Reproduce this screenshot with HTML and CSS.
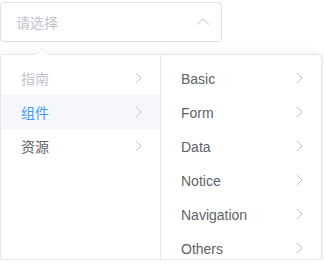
FILE: index.html
```html
<!DOCTYPE html>
<html>
<head>
<meta charset="utf-8">
<link rel="stylesheet" href="styles.css">
</head>
<body>
<div class="page">
  <div class="input">
    <span class="placeholder">请选择</span>
    <svg class="caret" width="14" height="8" viewBox="0 0 14 8"><polyline points="1,6.5 7,1 13,6.5" fill="none" stroke="#c0c4cc" stroke-width="1"/></svg>
  </div>
  <div class="dropdown">
    <span class="arrow"></span>
    <div class="panel">
      <ul class="menu">
        <li class="node disabled"><span>指南</span><svg class="chev" width="14" height="14" viewBox="0 0 14 14"><polyline points="5,2 10,7 5,12" fill="none" stroke="#c0c4cc" stroke-width="1"/></svg></li>
        <li class="node active"><span>组件</span><svg class="chev" width="14" height="14" viewBox="0 0 14 14"><polyline points="5,2 10,7 5,12" fill="none" stroke="#c0c4cc" stroke-width="1"/></svg></li>
        <li class="node"><span>资源</span><svg class="chev" width="14" height="14" viewBox="0 0 14 14"><polyline points="5,2 10,7 5,12" fill="none" stroke="#c0c4cc" stroke-width="1"/></svg></li>
      </ul>
      <ul class="menu last">
        <li class="node"><span>Basic</span><svg class="chev" width="14" height="14" viewBox="0 0 14 14"><polyline points="5,2 10,7 5,12" fill="none" stroke="#c0c4cc" stroke-width="1"/></svg></li>
        <li class="node"><span>Form</span><svg class="chev" width="14" height="14" viewBox="0 0 14 14"><polyline points="5,2 10,7 5,12" fill="none" stroke="#c0c4cc" stroke-width="1"/></svg></li>
        <li class="node"><span>Data</span><svg class="chev" width="14" height="14" viewBox="0 0 14 14"><polyline points="5,2 10,7 5,12" fill="none" stroke="#c0c4cc" stroke-width="1"/></svg></li>
        <li class="node"><span>Notice</span><svg class="chev" width="14" height="14" viewBox="0 0 14 14"><polyline points="5,2 10,7 5,12" fill="none" stroke="#c0c4cc" stroke-width="1"/></svg></li>
        <li class="node"><span>Navigation</span><svg class="chev" width="14" height="14" viewBox="0 0 14 14"><polyline points="5,2 10,7 5,12" fill="none" stroke="#c0c4cc" stroke-width="1"/></svg></li>
        <li class="node"><span>Others</span><svg class="chev" width="14" height="14" viewBox="0 0 14 14"><polyline points="5,2 10,7 5,12" fill="none" stroke="#c0c4cc" stroke-width="1"/></svg></li>
      </ul>
    </div>
  </div>
</div>
</body>
</html>
```
FILE: styles.css
```css
html, body {
  margin: 0;
  padding: 0;
  background: #fff;
}
body {
  font-family: "Liberation Sans", "Noto Sans CJK SC", sans-serif;
  font-size: 14px;
  color: #606266;
}
.page {
  padding-top: 2px;
}
.input {
  box-sizing: border-box;
  width: 222px;
  height: 40px;
  border: 1px solid #dcdfe6;
  border-radius: 4px;
  display: flex;
  align-items: center;
  justify-content: space-between;
  padding: 0 10px 0 15px;
}
.placeholder {
  color: #c0c4cc;
  font-family: "Noto Sans CJK SC", sans-serif;
}
.caret {
  margin-right: 1px;
  margin-bottom: 1px;
}
.dropdown {
  position: relative;
  margin-top: 12px;
  width: 322px;
  box-sizing: border-box;
  border: 1px solid #e4e7ed;
  border-radius: 4px;
  background: #fff;
  box-shadow: 0 2px 12px 0 rgba(0, 0, 0, 0.1);
}
.arrow {
  position: absolute;
  left: 35px;
  top: -7px;
  width: 0;
  height: 0;
  border-left: 6px solid transparent;
  border-right: 6px solid transparent;
  border-bottom: 6px solid #e4e7ed;
}
.arrow::after {
  content: "";
  position: absolute;
  left: -6px;
  top: 1px;
  border-left: 6px solid transparent;
  border-right: 6px solid transparent;
  border-bottom: 6px solid #fff;
}
.panel {
  display: flex;
}
.menu {
  list-style: none;
  margin: 0;
  box-sizing: border-box;
  width: 160px;
  height: 204px;
  padding: 6px 0;
  overflow: hidden;
  border-right: 1px solid #e4e7ed;
}
.menu.last {
  border-right: none;
}
.node {
  position: relative;
  height: 34px;
  line-height: 34px;
  padding: 0 30px 0 20px;
  display: flex;
  align-items: center;
  color: #606266;
}
.node span {
  flex: 1;
}
.menu.last .node span {
  padding-top: 2px;
  line-height: 32px;
}
.menu:first-child .node span {
  font-family: "Noto Sans CJK SC", sans-serif;
}
.node.disabled {
  color: #c0c4cc;
}
.node.active {
  color: #409eff;
  background: #f5f7fa;
}
.chev {
  position: absolute;
  right: 15px;
  top: 10px;
}
```
